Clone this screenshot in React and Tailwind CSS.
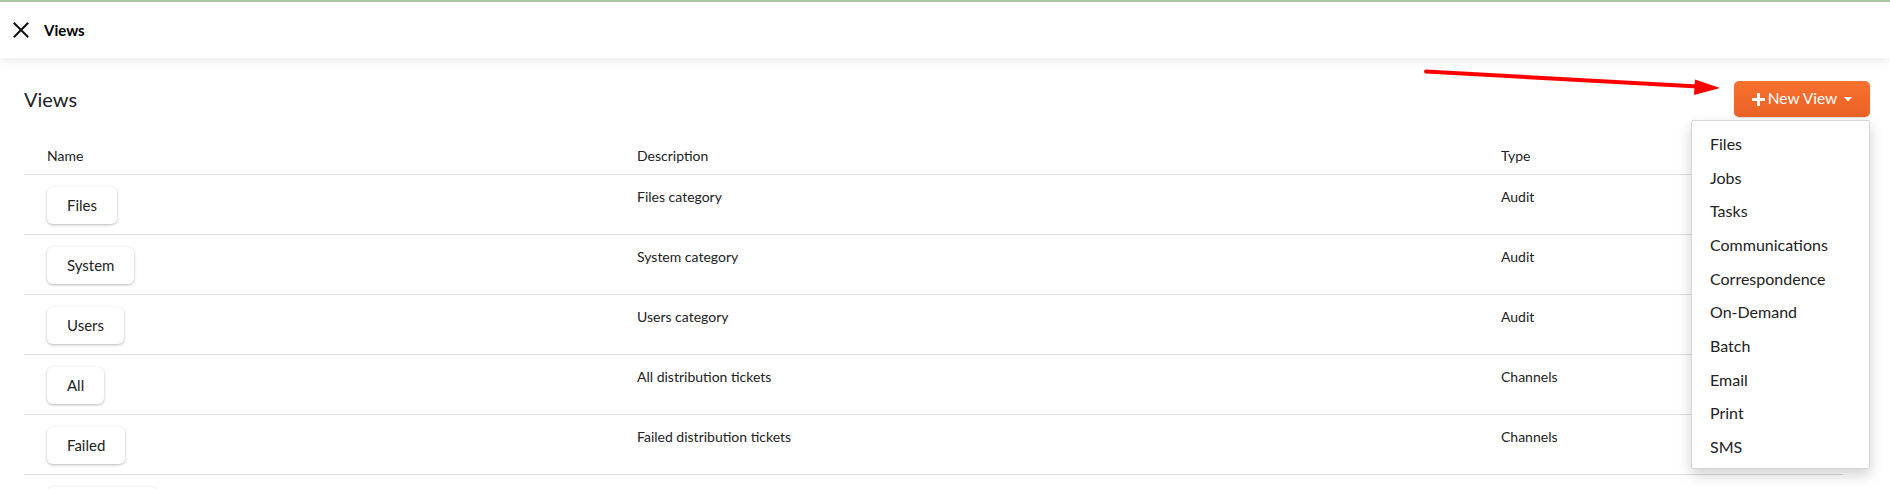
import { useState } from 'react';

const views = [
  { name: 'Files', description: 'Files category', type: 'Audit' },
  { name: 'System', description: 'System category', type: 'Audit' },
  { name: 'Users', description: 'Users category', type: 'Audit' },
  { name: 'All', description: 'All distribution tickets', type: 'Channels' },
  { name: 'Failed', description: 'Failed distribution tickets', type: 'Channels' },
];

const viewTypes = [
  'Files',
  'Jobs',
  'Tasks',
  'Communications',
  'Correspondence',
  'On-Demand',
  'Batch',
  'Email',
  'Print',
  'SMS',
];

const App = () => {
  const [menuOpen, setMenuOpen] = useState(true);

  return (
    <div className="relative min-h-screen bg-white text-[#222] font-['Lato','Liberation_Sans',sans-serif] overflow-hidden">
      {/* Top bar */}
      <header className="relative z-10 h-[58px] border-t-2 border-[#abc6a5] bg-white flex items-center shadow-[0_4px_10px_rgba(0,0,0,0.07)]">
        <button className="ml-[12px] w-[18px] h-[18px] flex items-center justify-center text-[#111]">
          <svg width="16" height="16" viewBox="0 0 16 16" fill="none" stroke="currentColor" strokeWidth="2" strokeLinecap="square">
            <path d="M1.5 1.5 14.5 14.5M14.5 1.5 1.5 14.5" />
          </svg>
        </button>
        <h1 className="ml-[14px] text-[15px] font-bold text-black">Views</h1>
      </header>

      <main className="px-6 pt-[23px]">
        {/* Title + action */}
        <div className="flex items-center justify-between w-[1846px]">
          <h2 className="text-[20px] text-[#222]">Views</h2>
          <div className="relative">
            <button
              onClick={() => setMenuOpen(!menuOpen)}
              className="h-[36px] w-[136px] flex items-center justify-center gap-[2px] rounded-[5px] bg-gradient-to-b from-[#f7722f] to-[#ea6125] text-white text-[15.5px] shadow-[0_1px_2px_rgba(0,0,0,0.15)]"
            >
              <svg width="13" height="13" viewBox="0 0 13 13" fill="currentColor">
                <path d="M5 0h3v5h5v3H8v5H5V8H0V5h5z" />
              </svg>
              <span className="ml-[1px]">New View</span>
              <svg width="8" height="5" viewBox="0 0 8 5" fill="currentColor" className="ml-[5px]">
                <path d="M0 0h8L4 4.5z" />
              </svg>
            </button>

            {menuOpen && (
              <ul className="absolute right-0 top-[39px] z-20 w-[179px] pt-[6px] pb-[4px] bg-white border border-[#d6d6d6] rounded-[2px] shadow-[0_6px_14px_rgba(0,0,0,0.18)]">
                {viewTypes.map((t) => (
                  <li key={t} className="h-[33.7px] flex items-center pl-[18px] text-[16px] text-[#222]">
                    {t}
                  </li>
                ))}
              </ul>
            )}
          </div>
        </div>

        {/* Views table */}
        <div className="mt-[19px] w-[1819px]">
          <div className="grid grid-cols-[590px_864px_1fr] h-[39px] items-center border-b border-[#dcdcdc] text-[14px] text-[#222]">
            <div className="pl-[23px]">Name</div>
            <div className="pl-[23px]">Description</div>
            <div className="pl-[23px]">Type</div>
          </div>
          {views.map((v) => (
            <div key={v.name} className="grid grid-cols-[590px_864px_1fr] h-[60px] border-b border-[#dcdcdc] text-[14px]">
              <div className="pl-[23px] pt-[12px]">
                <button className="h-[37px] px-5 rounded-[6px] bg-white text-[15px] text-[#222] shadow-[0_1px_3px_rgba(0,0,0,0.28)]">
                  {v.name}
                </button>
              </div>
              <div className="pl-[23px] pt-[13px] leading-[18px]">{v.description}</div>
              <div className="pl-[23px] pt-[13px] leading-[18px]">{v.type}</div>
            </div>
          ))}
          {/* next row, only its top shows */}
          <div className="h-[60px] pl-[23px] pt-[12px]">
            <div className="h-[37px] w-[111px] rounded-[6px] bg-white shadow-[0_1px_3px_rgba(0,0,0,0.28)]" />
          </div>
        </div>
      </main>

      {/* Annotation arrow */}
      <svg className="absolute left-0 top-0 pointer-events-none z-30" width="1890" height="489">
        <line x1="1426" y1="71.5" x2="1698" y2="86.5" stroke="#ff0000" strokeWidth="4" strokeLinecap="round" />
        <polygon points="1720,88 1695,79.5 1694,95" fill="#ff0000" />
      </svg>
    </div>
  );
};

export default App;
